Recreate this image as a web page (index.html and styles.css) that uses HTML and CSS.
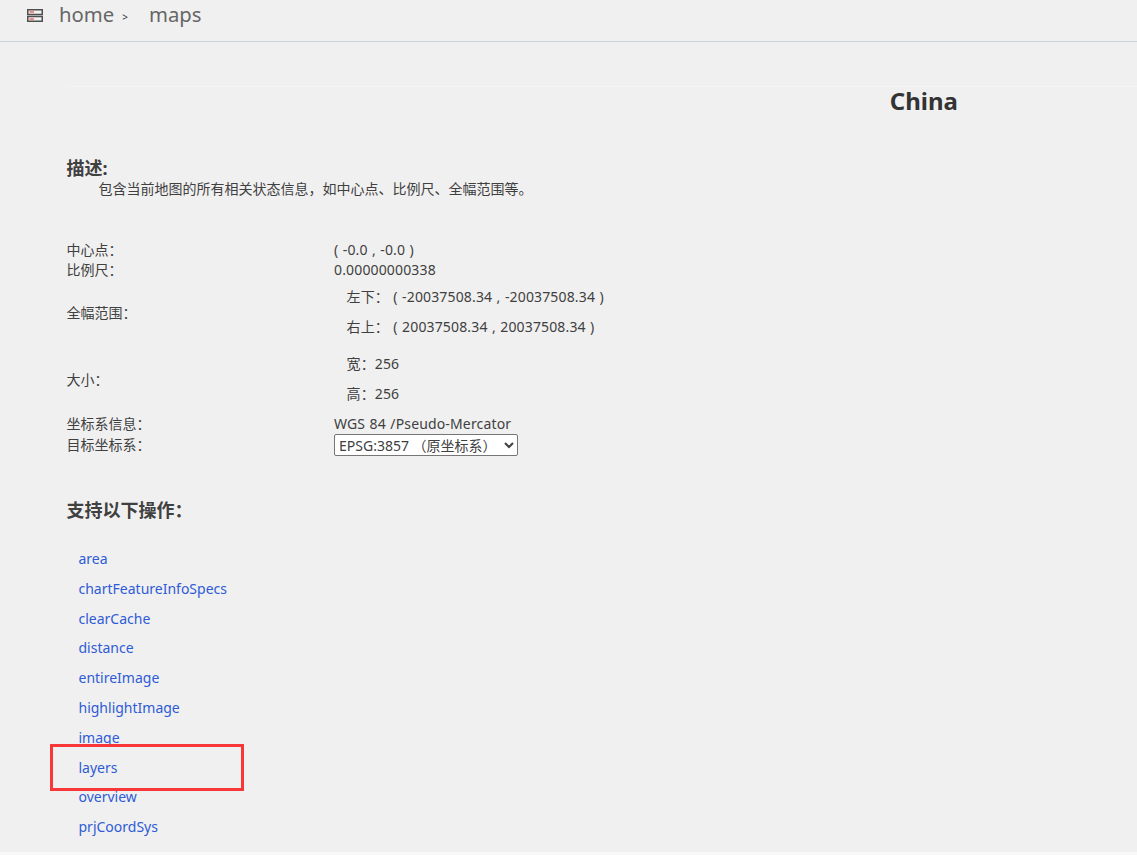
FILE: index.html
```html
<!DOCTYPE html>
<html lang="zh">
<head>
<meta charset="utf-8">
<title>China</title>
<link rel="stylesheet" href="styles.css">
</head>
<body>
<header class="topbar">
  <svg class="logo" width="16" height="13" viewBox="0 0 16 13">
    <rect x="0.75" y="0.75" width="14.5" height="4.75" fill="#f2f2f2" stroke="#4f4f4f" stroke-width="1.5"/>
    <rect x="0.75" y="7.5" width="14.5" height="4.75" fill="#f2f2f2" stroke="#4f4f4f" stroke-width="1.5"/>
    <rect x="2.5" y="2.5" width="4.5" height="1" fill="#e0302a"/>
    <rect x="2.5" y="9.5" width="4.5" height="1" fill="#e0302a"/>
  </svg>
  <a class="crumb crumb-home">home</a>
  <span class="sep">&gt;</span>
  <a class="crumb">maps</a>
</header>
<main class="page">
  <div class="panel">
    <h1 class="title">China</h1>
    <section class="content">
      <h2 class="h-desc">描述:</h2>
      <p class="desc">包含当前地图的所有相关状态信息，如中心点、比例尺、全幅范围等。</p>
      <div class="info">
        <div class="row"><span class="label">中心点：</span><span class="value">( -0.0 , -0.0 )</span></div>
        <div class="row"><span class="label">比例尺：</span><span class="value">0.00000000338</span></div>
        <div class="row multi bounds">
          <span class="label">全幅范围：</span>
          <div class="value"><p>左下： ( -20037508.34 , -20037508.34 )</p><p>右上： ( 20037508.34 , 20037508.34 )</p></div>
        </div>
        <div class="row multi size">
          <span class="label">大小：</span>
          <div class="value"><p>宽：256</p><p>高：256</p></div>
        </div>
        <div class="row"><span class="label">坐标系信息：</span><span class="value">WGS 84 /Pseudo-Mercator</span></div>
        <div class="row"><span class="label">目标坐标系：</span><span class="value"><select class="crs"><option>EPSG:3857 （原坐标系）</option></select></span></div>
      </div>
      <h2 class="h-ops">支持以下操作：</h2>
      <ul class="ops">
        <li><a>area</a></li>
        <li><a>chartFeatureInfoSpecs</a></li>
        <li><a>clearCache</a></li>
        <li><a>distance</a></li>
        <li><a>entireImage</a></li>
        <li><a>highlightImage</a></li>
        <li><a>image</a></li>
        <li><a>layers</a></li>
        <li><a>overview</a></li>
        <li><a>prjCoordSys</a></li>
      </ul>
    </section>
  </div>
</main>
<div class="callout"></div>
</body>
</html>
```
FILE: styles.css
```css
* { box-sizing: border-box; }
html, body { margin: 0; padding: 0; height: 855px; overflow: hidden; }
body {
  background: #f8f8f8;
  color: #404040;
  font-family: "Noto Sans", "Noto Sans CJK SC", sans-serif;
  font-size: 14px;
  position: relative;
}
.topbar {
  height: 42px;
  background: #f0f0f0;
  border-bottom: 1px solid #cdd3dd;
  display: flex;
  align-items: flex-start;
  padding-left: 27px;
}
.logo { margin-top: 9px; margin-right: 16px; }
.crumb { font-size: 20.3px; line-height: 29px; color: #666; }
.sep { font-size: 10px; line-height: 29px; margin: 3px 21px 0 8px; color: #333; }
.page { height: 810px; padding-top: 44px; background: #f0f0f0; overflow: hidden; }
.panel { margin-left: 66px; border-top: 1px solid #f4f4f8; }
.title { margin: 0; height: 29px; font-size: 24px; line-height: 28px; font-weight: 700; color: #333; text-align: right; padding-right: 179px; }
.content { padding: 41px 0 0 0.5px; }
.h-desc { margin: 0; font-size: 18px; line-height: 22px; font-weight: 700; }
.desc { margin: 0; padding-left: 32px; font-size: 14px; line-height: 20px; color: #404040; }
.info { margin-top: 41px; }
.row { display: flex; align-items: center; min-height: 20px; line-height: 20px; }
.label { width: 267.5px; font-size: 14px; }
.multi .label { padding-top: 1px; }
.value { letter-spacing: 0.15px; word-spacing: 0.6px; }
.value p { margin: 0 0 0 12.5px; line-height: 30px; }
.bounds { height: 60px; margin-top: 2px; }
.size { height: 60px; margin-top: 7px; margin-bottom: 5px; }
.crs { width: 184px; height: 22px; font: inherit; font-size: 14px; color: #404040; background: #fff; border: 1px solid #767676; border-radius: 2px; padding: 0; }
.h-ops { margin: 42px 0 0; font-size: 18px; line-height: 24px; font-weight: 700; }
.ops { list-style: none; margin: 22px 0 0; padding: 0 0 0 12px; }
.ops li { height: 29.8px; line-height: 30px; }
.ops a { color: #2f5bd6; }
.callout { position: absolute; left: 50px; top: 744px; width: 194px; height: 47px; border: 3px solid #f83838; }
```
